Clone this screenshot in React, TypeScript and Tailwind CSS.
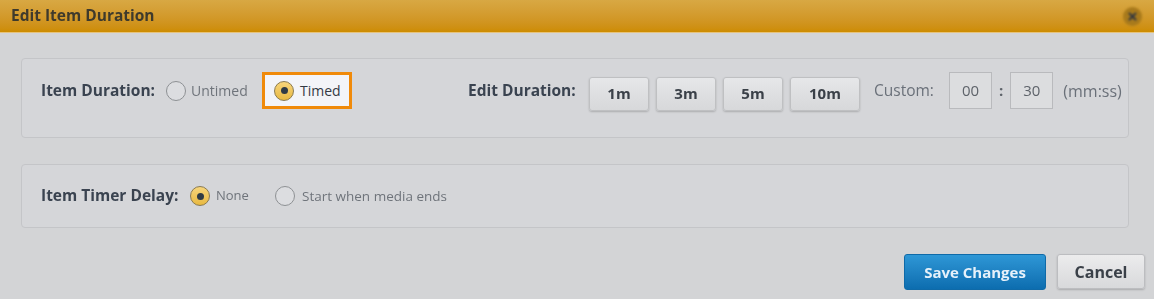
import React from 'react';

const font = { fontFamily: '"Open Sans", Lato, sans-serif' };

function Radio({ checked }: { checked?: boolean }) {
  if (checked) {
    return (
      <span className="w-[20px] h-[20px] rounded-full border-[1.5px] border-[#8a7a50] bg-gradient-to-b from-[#f7d57a] to-[#e8b940] flex items-center justify-center shrink-0">
        <span className="w-[7px] h-[7px] rounded-full bg-[#2f3a45]" />
      </span>
    );
  }
  return <span className="w-[20px] h-[20px] rounded-full border-[1.5px] border-[#8d9093] bg-[#dcdde0] shrink-0" />;
}

function DurationButton({ label, wide }: { label: string; wide?: boolean }) {
  return (
    <button
      className={`${wide ? 'w-[70px]' : 'w-[60px]'} h-[34px] rounded-[3px] border border-[#bfc0c2] bg-gradient-to-b from-[#e6e7e9] to-[#d7d8da] shadow-[0_1px_2px_rgba(0,0,0,0.2)] text-[15px] font-bold text-[#3a4048]`}
    >
      {label}
    </button>
  );
}

export default function App() {
  return (
    <div className="w-[1154px] h-[299px] bg-[#d3d4d6] overflow-hidden" style={font}>
      <div className="h-[33px] bg-gradient-to-b from-[#d8a843] to-[#cd8c00] border-b border-[#e6c37c] flex items-center justify-between pl-[11px] pr-[12px]">
        <h1 className="text-[15.5px] font-bold text-[#3e3a2c] blur-[0.7px]">Edit Item Duration</h1>
        <div className="w-[19px] h-[19px] rounded-full bg-[#a87a1c] flex items-center justify-center blur-[0.8px]">
          <svg width="9" height="9" viewBox="0 0 9 9">
            <path d="M1.5 1.5 L7.5 7.5 M7.5 1.5 L1.5 7.5" stroke="#2f3540" strokeWidth="2" strokeLinecap="round" />
          </svg>
        </div>
      </div>

      <div className="pt-[25px] pl-[21px] pr-[25px]">
        <div className="h-[80px] rounded-[4px] border border-[#c4c5c8] bg-[#d5d6d9] pt-[13px] pl-[19px] flex items-start">
          <div className="flex items-center h-[37px]">
            <span className="text-[15.5px] font-bold text-[#3a4350] blur-[0.7px] w-[112px] whitespace-nowrap">Item Duration:</span>
            <span className="flex items-center ml-[13px] gap-[5px] blur-[0.7px] w-[78px]">
              <Radio />
              <span className="text-[14px] text-[#6f747b]">Untimed</span>
            </span>
            <span className="ml-[18px] w-[90px] h-[37px] border-[3px] border-[#f08a0a] bg-[#f3f4f8] flex items-center pl-[9px] gap-[6px]">
              <Radio checked />
              <span className="text-[14px] text-[#333a44]">Timed</span>
            </span>
          </div>
          <div className="flex items-center h-[37px] ml-[116px]">
            <span className="text-[15.5px] font-bold text-[#3a4350] w-[108px] mr-[13px] blur-[0.7px] whitespace-nowrap">Edit Duration:</span>
            <div className="flex items-center gap-[7px] mt-[6px] blur-[0.7px]">
              <DurationButton label="1m" />
              <DurationButton label="3m" />
              <DurationButton label="5m" />
              <DurationButton label="10m" wide />
            </div>
            <div className="flex items-center ml-[14px] blur-[0.7px]">
              <span className="text-[15.5px] text-[#6a7079] w-[61px]">Custom:</span>
              <span className="ml-[14px] w-[43px] h-[37px] border border-[#b9babd] bg-[#dcdddf] flex items-center justify-center text-[15px] text-[#5e636a]">00</span>
              <span className="mx-[7px] text-[15px] font-bold text-[#5e636a]">:</span>
              <span className="w-[43px] h-[37px] border border-[#b9babd] bg-[#dcdddf] flex items-center justify-center text-[15px] text-[#5e636a]">30</span>
              <span className="ml-[10px] text-[16px] text-[#6a7079]">(mm:ss)</span>
            </div>
          </div>
        </div>

        <div className="mt-[26px] h-[64px] rounded-[4px] border border-[#c4c5c8] bg-[#d5d6d9] pl-[19px] flex items-center">
          <div className="flex items-center blur-[0.7px]">
            <span className="text-[15.5px] font-bold text-[#3a4350] w-[136px] whitespace-nowrap">Item Timer Delay:</span>
            <span className="flex items-center ml-[13px] gap-[6px] w-[85px]">
              <Radio checked />
              <span className="text-[13px] text-[#6f747b]">None</span>
            </span>
            <span className="flex items-center gap-[7px]">
              <Radio />
              <span className="text-[13.5px] text-[#6f747b]">Start when media ends</span>
            </span>
          </div>
        </div>
      </div>

      <div className="flex justify-end gap-[11px] pr-[9px] mt-[26px] blur-[0.7px]">
        <button className="w-[142px] h-[36px] rounded-[3px] bg-gradient-to-b from-[#2e97d6] to-[#0c6daf] border border-[#0f6aa8] text-[15px] font-bold text-[#e6f1fa]">
          Save Changes
        </button>
        <button className="w-[88px] h-[35px] rounded-[3px] bg-gradient-to-b from-[#ececed] to-[#d8d9db] border border-[#bcbdc0] shadow-[0_1px_2px_rgba(0,0,0,0.2)] text-[16px] font-bold text-[#3a4048]">
          Cancel
        </button>
      </div>
    </div>
  );
}
